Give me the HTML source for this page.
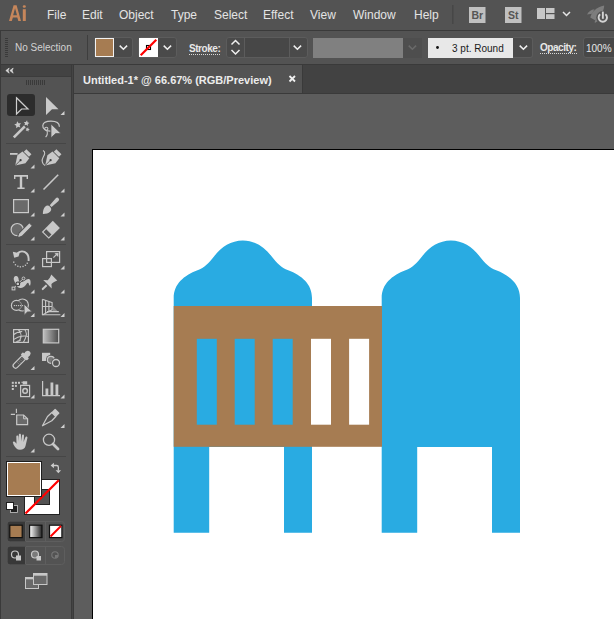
<!DOCTYPE html>
<html><head><meta charset="utf-8">
<style>
*{margin:0;padding:0;box-sizing:border-box}
html,body{width:614px;height:619px;overflow:hidden;background:#535353;font-family:"Liberation Sans",sans-serif}
.a{position:absolute}
.t{position:absolute;white-space:nowrap;line-height:1}
</style></head><body>
<!-- menu bar -->
<div class="a" style="left:0;top:0;width:614px;height:30px;background:#535353"></div>
<div class="a" style="left:0;top:30px;width:614px;height:1px;background:#3a3a3a"></div>
<!-- control bar -->
<div class="a" style="left:0;top:31px;width:614px;height:33px;background:#535353"></div>
<div class="a" style="left:0;top:30px;width:1px;height:589px;background:#3a3a3a"></div>
<div class="a" style="left:0;top:64px;width:614px;height:1px;background:#3a3a3a"></div>
<!-- toolbar -->
<div class="a" style="left:1px;top:65px;width:70px;height:11px;background:#434343"></div>
<div class="a" style="left:1px;top:76px;width:70px;height:1px;background:#3c3c3c"></div>
<div class="a" style="left:71px;top:65px;width:3px;height:554px;background:#3a3a3a"></div><div class="a" style="left:72px;top:65px;width:1px;height:554px;background:#444"></div>
<!-- tab bar -->
<div class="a" style="left:74px;top:65px;width:540px;height:28px;background:#424242"></div>
<div class="a" style="left:74px;top:65px;width:228px;height:28px;background:#535353"></div>
<div class="a" style="left:302px;top:65px;width:1px;height:28px;background:#3a3a3a"></div>
<div class="a" style="left:74px;top:93px;width:540px;height:1px;background:#3a3a3a"></div>
<!-- canvas -->
<div class="a" style="left:74px;top:94px;width:540px;height:525px;background:#5d5d5d"></div>
<div class="a" style="left:92px;top:149px;width:522px;height:470px;background:#fff;border-left:1px solid #000;border-top:1px solid #000"></div>

<!-- control bar widgets -->
<div class="a" style="left:87px;top:35px;width:1px;height:25px;background:#3e3e3e"></div>
<div class="a" style="left:94px;top:37px;width:39px;height:21px;border:1px solid #5c5c5c;border-radius:3px;background:#4a4a4a"></div>
<div class="a" style="left:95px;top:38px;width:19px;height:19px;background:#fff;border:1px solid #f2f2f2"></div>
<div class="a" style="left:96px;top:39px;width:17px;height:17px;background:#a67c52"></div>
<div class="a" style="left:138px;top:37px;width:39px;height:21px;border:1px solid #5c5c5c;border-radius:3px;background:#4a4a4a"></div>
<div class="a" style="left:139px;top:38px;width:19px;height:19px;background:#fff"></div>
<div class="a" style="left:226px;top:37px;width:82px;height:21px;border:1px solid #5c5c5c;border-radius:3px;background:#4a4a4a"></div>
<div class="a" style="left:244px;top:38px;width:1px;height:19px;background:#5c5c5c"></div>
<div class="a" style="left:245px;top:38px;width:44px;height:19px;background:#474747"></div>
<div class="a" style="left:289px;top:38px;width:1px;height:19px;background:#5c5c5c"></div>
<div class="a" style="left:313px;top:38px;width:90px;height:20px;background:#808080"></div>
<div class="a" style="left:403px;top:38px;width:19px;height:20px;background:#4e4e4e"></div>
<div class="a" style="left:428px;top:38px;width:86px;height:20px;background:#e8e8e8"></div>
<div class="a" style="left:513px;top:37px;width:20px;height:21px;border:1px solid #5c5c5c;border-left:none;border-radius:0 3px 3px 0;background:#4a4a4a"></div>
<div class="a" style="left:583px;top:37px;width:40px;height:21px;border:1px solid #5c5c5c;border-radius:3px;background:#474747"></div>

<!-- text -->
<div class="t" style="left:47px;top:9px;font-size:12px;color:#e4e4e4">File</div>
<div class="t" style="left:82px;top:9px;font-size:12px;color:#e4e4e4">Edit</div>
<div class="t" style="left:119px;top:9px;font-size:12px;color:#e4e4e4">Object</div>
<div class="t" style="left:171px;top:9px;font-size:12px;color:#e4e4e4">Type</div>
<div class="t" style="left:214px;top:9px;font-size:12px;color:#e4e4e4">Select</div>
<div class="t" style="left:263px;top:9px;font-size:12px;color:#e4e4e4">Effect</div>
<div class="t" style="left:310px;top:9px;font-size:12px;color:#e4e4e4">View</div>
<div class="t" style="left:353px;top:9px;font-size:12px;color:#e4e4e4">Window</div>
<div class="t" style="left:414px;top:9px;font-size:12px;color:#e4e4e4">Help</div>

<div class="t" style="left:15px;top:43px;font-size:10px;color:#d2d2d2">No Selection</div>
<div class="t" style="left:189px;top:44px;font-size:10px;color:#e8e8e8;font-weight:bold;letter-spacing:-0.45px">Stroke:</div>
<div class="t" style="left:452px;top:44px;font-size:10px;color:#1a1a1a">3 pt. Round</div>
<div class="t" style="left:540px;top:43px;font-size:10px;color:#e8e8e8;font-weight:bold;letter-spacing:-0.45px">Opacity:</div>
<div class="t" style="left:586px;top:44px;font-size:10px;color:#e8e8e8">100%</div>
<div class="t" style="left:83px;top:75px;font-size:11px;color:#ececec;font-weight:bold">Untitled-1* @ 66.67% (RGB/Preview)</div>
<svg class="a" style="left:0;top:0" width="614" height="619" viewBox="0 0 614 619">
<!-- artwork -->
<g fill="#29abe2">
<path id="post" d="M173.7,532.8 L173.7,298 C173.7,284 184,275.5 197.5,270.3 C204.5,267.6 209,263 214,256.5 C221,247 231,240.4 242.85,240.4 C254.7,240.4 264.7,247 271.7,256.5 C276.7,263 281.2,267.6 288.2,270.3 C301.7,275.5 312,284 312,298 L312,532.8 L284,532.8 L284,447 L209.2,447 L209.2,532.8 Z"/>
<use href="#post" transform="translate(208,0)"/>
</g>
<rect x="173.7" y="306" width="208.3" height="140.8" fill="#a67c52"/>
<g fill="#29abe2">
<rect x="196.8" y="338.8" width="20" height="85.9"/>
<rect x="234.7" y="338.8" width="20" height="85.9"/>
<rect x="272.7" y="338.8" width="20" height="85.9"/>
</g>
<g fill="#fff">
<rect x="311" y="338.8" width="20" height="85.9"/>
<rect x="349.1" y="338.8" width="20" height="85.9"/>
</g>
</svg>

<svg class="a" style="left:0;top:0" width="614" height="619" viewBox="0 0 614 619">
<!-- Ai logo -->
<path fill="#c6865b" fill-rule="evenodd" d="M9,21 L13.6,5.2 L16.6,5.2 L21,21 L18.3,21 L17.3,17.4 L12.9,17.4 L11.8,21 Z M13.1,15.2 L17,15.2 L15.05,8.3 Z"/>
<rect x="22.8" y="9.2" width="3" height="11.8" fill="#c6865b"/>
<rect x="22.8" y="5.2" width="3" height="2.6" rx="1.2" fill="#c6865b"/>
<!-- menu separator + app icons -->
<rect x="452" y="5" width="1.5" height="19" fill="#474747"/>
<rect x="469" y="7" width="16.5" height="16" fill="#c0c0c0"/>
<text x="477.3" y="19.2" font-size="10.5" font-weight="bold" fill="#555555" text-anchor="middle" font-family="Liberation Sans">Br</text>
<rect x="505" y="7" width="16.5" height="16" fill="#c0c0c0"/>
<text x="513.3" y="19.2" font-size="10.5" font-weight="bold" fill="#555555" text-anchor="middle" font-family="Liberation Sans">St</text>
<rect x="537" y="8" width="8" height="11" fill="#c8c8c8"/>
<rect x="546" y="8" width="8.5" height="5" fill="#c8c8c8"/>
<rect x="546" y="14.2" width="8.5" height="4.8" fill="#c8c8c8"/>
<path d="M563,12 L566.5,15.5 L570,12" fill="none" stroke="#e6e6e6" stroke-width="1.5"/>
<path d="M590.3,17.6 C591.5,12 596.5,7 604.2,5.6 C604,11.5 600.5,16.5 595,20.2 Z" fill="#7d7d7d"/>
<path d="M587,14.6 C588.5,11.5 591,9.5 594.5,9.2 L592,13.8 Z" fill="#7d7d7d"/>
<path d="M594.8,23 C594.5,21 595.5,19 597.5,17.5 L598.8,20.5 Z" fill="#7d7d7d"/>
<circle cx="602.8" cy="17.6" r="6.6" fill="#535353"/>
<path d="M600.2,14.3 A4.2,4.2 0 1 0 605.4,14.3" fill="none" stroke="#d4d4d4" stroke-width="1.9"/>
<rect x="601.6" y="11" width="2.4" height="8.3" fill="#535353"/>
<rect x="601.9" y="11.6" width="1.9" height="7.2" fill="#d4d4d4"/>

<!-- control bar grip + chevrons -->
<g fill="#3a3a3a"><rect x="5" y="38" width="3" height="1"/><rect x="5" y="40" width="3" height="1"/><rect x="5" y="42" width="3" height="1"/><rect x="5" y="44" width="3" height="1"/><rect x="5" y="46" width="3" height="1"/><rect x="5" y="48" width="3" height="1"/><rect x="5" y="50" width="3" height="1"/><rect x="5" y="52" width="3" height="1"/><rect x="5" y="54" width="3" height="1"/><rect x="5" y="56" width="3" height="1"/></g>
<g fill="none" stroke="#f0f0f0" stroke-width="1.5">
<path d="M119.7,45.6 L123.4,49.3 L127.1,45.6"/>
<path d="M163.7,45.6 L167.4,49.3 L171.1,45.6"/>
<path d="M231.5,44.5 L235.5,40.5 L239.5,44.5"/>
<path d="M231.5,50 L235.5,54 L239.5,50"/>
<path d="M293.7,45.6 L297.4,49.3 L301.1,45.6"/>
<path d="M519.7,45.6 L523.4,49.3 L527.1,45.6"/>
</g>
<path d="M408.7,45.6 L412.4,49.3 L416.1,45.6" fill="none" stroke="#6a6a6a" stroke-width="1.5"/>
<rect x="146.5" y="45.5" width="4" height="4" fill="none" stroke="#000" stroke-width="1.1"/>
<path d="M140.7,55.2 L156.3,39.7" stroke="#ff0000" stroke-width="2.2"/>
<circle cx="437.5" cy="47.5" r="1.4" fill="#111"/>
<g fill="#d8d8d8"><rect x="189" y="54" width="1" height="1"/><rect x="191" y="54" width="1" height="1"/><rect x="193" y="54" width="1" height="1"/><rect x="195" y="54" width="1" height="1"/><rect x="197" y="54" width="1" height="1"/><rect x="199" y="54" width="1" height="1"/><rect x="201" y="54" width="1" height="1"/><rect x="203" y="54" width="1" height="1"/><rect x="205" y="54" width="1" height="1"/><rect x="207" y="54" width="1" height="1"/><rect x="209" y="54" width="1" height="1"/><rect x="211" y="54" width="1" height="1"/><rect x="213" y="54" width="1" height="1"/><rect x="215" y="54" width="1" height="1"/><rect x="217" y="54" width="1" height="1"/><rect x="219" y="54" width="1" height="1"/></g>
<g fill="#d8d8d8"><rect x="540" y="53" width="1" height="1"/><rect x="542" y="53" width="1" height="1"/><rect x="544" y="53" width="1" height="1"/><rect x="546" y="53" width="1" height="1"/><rect x="548" y="53" width="1" height="1"/><rect x="550" y="53" width="1" height="1"/><rect x="552" y="53" width="1" height="1"/><rect x="554" y="53" width="1" height="1"/><rect x="556" y="53" width="1" height="1"/><rect x="558" y="53" width="1" height="1"/><rect x="560" y="53" width="1" height="1"/><rect x="562" y="53" width="1" height="1"/><rect x="564" y="53" width="1" height="1"/><rect x="566" y="53" width="1" height="1"/><rect x="568" y="53" width="1" height="1"/><rect x="570" y="53" width="1" height="1"/><rect x="572" y="53" width="1" height="1"/><rect x="574" y="53" width="1" height="1"/><rect x="576" y="53" width="1" height="1"/></g>
<!-- tab close -->
<path d="M289.5,76 L295,81.5 M295,76 L289.5,81.5" stroke="#f0f0f0" stroke-width="1.8"/>
<!-- panel header << -->
<path d="M9.2,68 L5.8,70.6 L9.2,73.2 L8.2,70.6 Z M13.2,68 L9.8,70.6 L13.2,73.2 L12.2,70.6 Z" fill="#d8d8d8" stroke="#d8d8d8" stroke-width="0.6" stroke-linejoin="round"/>
<g fill="#3a3a3a"><rect x="26" y="80" width="1" height="5"/><rect x="28" y="80" width="1" height="5"/><rect x="30" y="80" width="1" height="5"/><rect x="32" y="80" width="1" height="5"/><rect x="34" y="80" width="1" height="5"/><rect x="36" y="80" width="1" height="5"/><rect x="38" y="80" width="1" height="5"/><rect x="40" y="80" width="1" height="5"/><rect x="42" y="80" width="1" height="5"/><rect x="44" y="80" width="1" height="5"/></g>
<!-- separators -->
<g fill="#464646"><rect x="6" y="143" width="60" height="1"/><rect x="6" y="244" width="60" height="1"/><rect x="6" y="322" width="60" height="1"/><rect x="6" y="374" width="60" height="1"/><rect x="6" y="403" width="60" height="1"/><rect x="6" y="456" width="60" height="1"/></g>
<!-- corner triangles -->
<g fill="#d0d0d0">
<path d="M64.5,111 V115 H60.5Z"/>
<path d="M34.5,164.5 V168.5 H30.5Z"/>
<path d="M34.5,188.5 V192.5 H30.5Z"/><path d="M64.5,188.5 V192.5 H60.5Z"/>
<path d="M34.5,212.5 V216.5 H30.5Z"/><path d="M64.5,212.5 V216.5 H60.5Z"/>
<path d="M34.5,236.5 V240.5 H30.5Z"/><path d="M64.5,236.5 V240.5 H60.5Z"/>
<path d="M34.5,265.5 V269.5 H30.5Z"/><path d="M64.5,265.5 V269.5 H60.5Z"/>
<path d="M34.5,289.5 V293.5 H30.5Z"/><path d="M64.5,289.5 V293.5 H60.5Z"/>
<path d="M34.5,313 V317 H30.5Z"/><path d="M64.5,313 V317 H60.5Z"/>
<path d="M34.5,366 V370 H30.5Z"/>
<path d="M34.5,394.5 V398.5 H30.5Z"/><path d="M64.5,394.5 V398.5 H60.5Z"/>
<path d="M64.5,424 V428 H60.5Z"/>
<path d="M34.5,448.5 V452.5 H30.5Z"/>
</g>
<!-- TOOLS -->
<rect x="7" y="94" width="28" height="22" rx="3" fill="#2c2c2c"/>
<path d="M16.5,97.8 L28,109 L21.6,109 L16.5,114 Z" fill="none" stroke="#cfcfcf" stroke-width="1.2" stroke-linejoin="miter"/>
<path d="M46,97 L58.5,109.3 L52,109.3 L46,115 Z" fill="#cacaca"/>
<!-- wand -->
<path d="M13.8,137.3 L24.8,126.3" stroke="#c8c8c8" stroke-width="2.6"/>
<path d="M17.17,121.35 L18.59,123.28 L20.98,123.21 L19.58,125.15 L20.39,127.40 L18.11,126.67 L16.22,128.14 L16.21,125.75 L14.24,124.40 L16.51,123.65 Z" fill="#c8c8c8"/>
<path d="M27.02,120.35 L27.58,122.26 L29.47,122.88 L27.82,124.00 L27.82,126.00 L26.24,124.78 L24.34,125.38 L25.01,123.51 L23.85,121.89 L25.84,121.95 Z" fill="#c8c8c8"/>
<path d="M28.10,127.28 L28.39,128.78 L29.80,129.38 L28.46,130.13 L28.32,131.65 L27.20,130.61 L25.71,130.95 L26.35,129.56 L25.57,128.25 L27.09,128.43 Z" fill="#c8c8c8"/>
<!-- lasso -->
<path d="M50.5,131.2 C45,131 42.6,128.5 42.8,125.5 C43.1,122.6 47,121.2 51,121.2 C55.5,121.2 59.4,123 59.4,126.8" fill="none" stroke="#c8c8c8" stroke-width="1.2"/>
<circle cx="46.3" cy="128.8" r="1.6" fill="none" stroke="#c8c8c8" stroke-width="1.1"/>
<path d="M46.8,130.4 C47.8,132.8 47.3,135.4 45.6,137.2" fill="none" stroke="#c8c8c8" stroke-width="1.1"/>
<path d="M51,124 L61,133.6 L55.6,133.6 L51,137.8 Z" fill="#cacaca" stroke="#535353" stroke-width="0.7"/>
<!-- pen -->
<rect x="10" y="153" width="7.6" height="1.8" fill="#c8c8c8"/>
<g transform="translate(22.7,158) rotate(45)">
<rect x="-3.6" y="-8.8" width="7.2" height="3.6" fill="#c8c8c8"/>
<path d="M-4.8,-4.5 H4.8 L5.7,1.8 L0,10.6 L-5.7,1.8 Z" fill="#c8c8c8"/>
<circle cx="0" cy="3" r="1.1" fill="#3e3e3e"/>
<path d="M0,3 V10.6" stroke="#3e3e3e" stroke-width="0.75"/>
</g>
<g transform="translate(52.7,158) rotate(45)">
<rect x="-3.6" y="-8.8" width="7.2" height="3.6" fill="#c8c8c8"/>
<path d="M-4.8,-4.5 H4.8 L5.7,1.8 L0,10.6 L-5.7,1.8 Z" fill="#c8c8c8"/>
<circle cx="0" cy="3" r="1.1" fill="#3e3e3e"/>
<path d="M0,3 V10.6" stroke="#3e3e3e" stroke-width="0.75"/>
</g>
<path d="M43,150.5 C46,152 44.5,155 43,157.5 C41.5,160 42,164 45,165.5" fill="none" stroke="#c8c8c8" stroke-width="1.1"/>
<!-- type -->
<path d="M14,175 H28 V179 H26.6 V176.7 H22.2 V187.4 H24.6 V189 H17.4 V187.4 H19.8 V176.7 H15.4 V179 H14 Z" fill="#c8c8c8"/>
<!-- line -->
<path d="M43.5,189.5 L58.2,174.8" stroke="#c8c8c8" stroke-width="1.6"/>
<!-- rect -->
<rect x="13.6" y="199.6" width="14.8" height="13" fill="#6a6a6a" stroke="#cacaca" stroke-width="1.2"/>
<!-- brush -->
<g transform="translate(50.8,206) rotate(45)">
<path d="M-1.9,-9 A1.9,1.9 0 0 1 1.9,-9 L1.3,0.2 H-1.3 Z" fill="#c8c8c8"/>
<path d="M-3.5,4.2 C-3.5,2.2 -2,1.1 0,1.1 C2,1.1 3.5,2.2 3.5,4.2 C3.5,7 2,9.3 0,11.2 C-2,9.3 -3.5,7 -3.5,4.2 Z" fill="#c8c8c8"/>
</g>
<!-- shaper -->
<circle cx="17.2" cy="229.6" r="6.1" fill="#6a6a6a" stroke="#c8c8c8" stroke-width="1.2"/>
<g transform="translate(24.4,230.8) rotate(45)">
<path d="M-2.2,-9.2 H2.2 V5.5 L0.8,8.8 H-0.8 L-2.2,5.5 Z" fill="#c8c8c8" stroke="#535353" stroke-width="1"/>
</g>
<!-- eraser -->
<g transform="translate(51.1,229.6) rotate(-45)">
<rect x="-2.6" y="-5" width="10" height="10" fill="#c8c8c8"/>
<rect x="-7.6" y="-4.3" width="5" height="8.6" fill="#535353" stroke="#c8c8c8" stroke-width="1.2"/>
</g>
<!-- rotate -->
<path d="M17.5,253.2 C19,252 20.5,251.4 22,251.4 C25.8,251.4 28.6,254.6 28.6,258.5 V261" fill="none" stroke="#c8c8c8" stroke-width="1.9"/>
<path d="M12.8,251.8 L19.6,253.2 L18.5,256.5 L14.2,257.8 Z" fill="#c8c8c8"/>
<g fill="#c8c8c8"><rect x="13.1" y="261.5" width="1.3" height="1.3"/><rect x="14.8" y="264.1" width="1.3" height="1.3"/><rect x="17.2" y="265.6" width="1.3" height="1.3"/><rect x="19.7" y="266.2" width="1.3" height="1.3"/><rect x="22.4" y="265.8" width="1.3" height="1.3"/><rect x="24.8" y="264.6" width="1.3" height="1.3"/><rect x="26.6" y="262.6" width="1.3" height="1.3"/></g>
<!-- scale -->
<rect x="42.6" y="258.6" width="8.8" height="8" fill="none" stroke="#c8c8c8" stroke-width="1.2"/>
<rect x="46.6" y="251.6" width="13" height="10.8" fill="none" stroke="#c8c8c8" stroke-width="1.2"/>
<path d="M53.4,257.6 L57.4,253.6" stroke="#c8c8c8" stroke-width="1.2"/>
<path d="M58.5,253 L54.5,253.3 L58.2,257 Z" fill="#c8c8c8"/>
<!-- puppet -->
<path d="M13.8,279.8 C13.4,277.5 14.6,275.8 16.2,276 C17.6,276.2 18.6,277.5 18.6,279 C18.4,280.5 19.5,282 21.5,282 C23.5,282 25,280.6 26.5,279.6 C28.3,278.6 30,279 30.5,281 C30.8,282.5 30.6,284 30.2,285.4 C29.5,285.8 29,285 28.8,284 C28.5,282.5 27.8,282.3 27,283.2 C25.5,285.5 23.5,287.8 21,288 C18.5,288.2 16.5,286.5 15.8,284.5 C15.3,283 14.3,281.5 13.8,279.8 Z" fill="#c8c8c8"/>
<path d="M13.5,288.5 L17.8,283.9 L23.5,278.4" stroke="#535353" stroke-width="2.2"/>
<path d="M13.5,288.5 L17.8,283.9 L23.5,278.4" stroke="#c8c8c8" stroke-width="0.9"/>
<rect x="12.1" y="287.1" width="2.8" height="2.8" fill="#535353" stroke="#c8c8c8" stroke-width="1"/>
<circle cx="23.5" cy="278.4" r="1.4" fill="#535353" stroke="#c8c8c8" stroke-width="1"/>
<circle cx="17.8" cy="283.9" r="1.9" fill="#c8c8c8" stroke="#3a3a3a" stroke-width="1.1"/>
<!-- pin -->
<g transform="translate(48.6,283.2) rotate(45)">
<path d="M-4.2,-8 H4.2 C3.2,-6 2.5,-3.5 2.6,-1.4 L6,1.6 H-6 L-2.6,-1.4 C-2.5,-3.5 -3.2,-6 -4.2,-8 Z" fill="#c8c8c8"/>
<path d="M-1,2.8 H1 V8.3 A1,1 0 0 1 -1,8.3 Z" fill="#c8c8c8"/>
</g>
<!-- shape builder -->
<circle cx="16.4" cy="305.4" r="4.4" fill="none" stroke="#c8c8c8" stroke-width="2.4"/>
<circle cx="22.4" cy="305" r="5.4" fill="none" stroke="#c8c8c8" stroke-width="2.4"/>
<circle cx="16.4" cy="305.4" r="4.4" fill="#535353"/>
<circle cx="22.4" cy="305" r="5.4" fill="#535353"/>
<path d="M18.6,301.2 A4.4,4.4 0 0 1 18.6,309.6" fill="none" stroke="#8c8c8c" stroke-width="1"/>
<g fill="#d0d0d0"><circle cx="14.4" cy="305.6" r="0.7"/><circle cx="16.4" cy="305.6" r="0.7"/><circle cx="18.5" cy="305.6" r="0.7"/><circle cx="20.5" cy="305.6" r="0.7"/><circle cx="22.6" cy="305.6" r="0.7"/></g>
<path d="M24,304 L32.2,311.8 L27.4,312 L24.2,315.2 Z" fill="#cacaca" stroke="#535353" stroke-width="0.8" stroke-linejoin="miter"/>
<!-- perspective grid -->
<path d="M42.4,299.3 V315 M42.4,299.3 L52.6,302.8 M42.4,315 L52.6,309.5 M45.6,300.4 V313.3 M48.9,301.5 V311.5 M52.1,302.6 V309.8 M42.4,306.5 H52.3" fill="none" stroke="#c8c8c8" stroke-width="1.1"/>
<path d="M47,311.6 H58.8 M42.4,314.7 H60.4" stroke="#c8c8c8" stroke-width="1.1"/>
<path d="M52.6,305.8 L57.4,311 H52.6 Z" fill="#8a8a8a"/>
<!-- mesh -->
<rect x="13.6" y="329.6" width="14.8" height="12.8" fill="none" stroke="#c8c8c8" stroke-width="1.2"/>
<path d="M18.3,329.5 C21,332 21.5,336 20.5,338.5 C19.8,340 19,341.5 18.5,342.8 M24.8,329.5 C26.6,332 26.5,336 25.3,338.5 C24.6,340 23.8,341.5 23.2,342.8 M13.4,334.8 C15.5,333 18.5,331.8 22.2,331.6 M13.4,339.6 C16,338 19,336.5 21.3,336.2 C24,336 26.5,336 28.6,336.4 M15.5,342.6 C17,341.2 19,340.4 20.8,340.2" fill="none" stroke="#c8c8c8" stroke-width="1.05"/>
<!-- gradient -->
<defs><linearGradient id="gr" x1="0" x2="1"><stop offset="0" stop-color="#c0c0c0"/><stop offset="1" stop-color="#4a4a4a"/></linearGradient>
<linearGradient id="gr2" x1="0" x2="1"><stop offset="0" stop-color="#fff"/><stop offset="1" stop-color="#222"/></linearGradient></defs>
<rect x="43.3" y="329.3" width="15.4" height="13.6" fill="url(#gr)" stroke="#c8c8c8" stroke-width="1.2"/>
<!-- eyedropper -->
<g transform="translate(21.3,360) rotate(45)">
<circle cx="0" cy="-9.2" r="2.7" fill="#c8c8c8"/>
<rect x="-2.7" y="-9.2" width="5.4" height="3" fill="#c8c8c8"/>
<rect x="-4.3" y="-6.6" width="8.6" height="3.2" rx="0.8" fill="#c8c8c8"/>
<path d="M-2.5,-3.4 H2.5 V8 A2.5,2.5 0 0 1 -2.5,8 Z" fill="#535353" stroke="#c8c8c8" stroke-width="1.25"/>
<path d="M-1.2,-1.5 H1.2 M-1.2,0.5 H1.2 M-1.2,2.5 H1.2 M-1.2,4.5 H1.2" stroke="#8a8a8a" stroke-width="0.7"/>
</g>
<!-- blend -->
<rect x="42" y="352.8" width="8.2" height="8.2" fill="#c8c8c8"/>
<circle cx="50.9" cy="359.8" r="4.9" fill="#535353"/>
<circle cx="50.9" cy="359.8" r="3.5" fill="#7a7a7a" stroke="#c8c8c8" stroke-width="1.2"/>
<circle cx="56" cy="363" r="4.9" fill="#535353"/>
<circle cx="56" cy="363" r="3.5" fill="#535353" stroke="#c8c8c8" stroke-width="1.3"/>
<!-- symbol sprayer -->
<g fill="#c8c8c8"><rect x="11.8" y="381.8" width="2" height="2"/><rect x="14.9" y="381.8" width="2" height="2"/><rect x="18" y="381.8" width="2" height="2"/><rect x="11.8" y="384.9" width="2" height="2"/><rect x="14.9" y="384.9" width="2" height="2"/><rect x="11.8" y="388" width="2" height="2"/></g>
<path d="M22.6,384.6 L22.9,381.2 H27.2 V384.6 Z M21.4,381.8 H23 V382.8 H21.4 Z" fill="#c8c8c8"/>
<rect x="20.6" y="385.4" width="9" height="11.2" fill="none" stroke="#c8c8c8" stroke-width="1.2"/>
<circle cx="25.1" cy="390.9" r="2.3" fill="none" stroke="#c8c8c8" stroke-width="1.5"/>
<!-- graph -->
<path d="M42.6,381 V395.6 H60" fill="none" stroke="#c8c8c8" stroke-width="1.2"/>
<rect x="45.5" y="388.5" width="2.8" height="7" fill="#c8c8c8"/>
<rect x="50.5" y="382.5" width="2.8" height="13" fill="#c8c8c8"/>
<rect x="55.5" y="384.5" width="2.8" height="11" fill="#c8c8c8"/>
<!-- artboard -->
<path d="M16.7,415 H23.6 L27.6,418.8 V424.6 H16.7 Z" fill="#6a6a6a" stroke="#c8c8c8" stroke-width="1.2"/>
<path d="M23.6,415 V418.8 H27.6" fill="none" stroke="#c8c8c8" stroke-width="1"/>
<path d="M10.8,414.4 H15 M16.4,408.8 V413" stroke="#c8c8c8" stroke-width="1.1"/>
<!-- pencil -->
<g transform="translate(50,418.3) rotate(45)">
<rect x="-3.3" y="-10.6" width="6.6" height="5.2" rx="1" fill="#c8c8c8"/>
<path d="M-2.8,-5.4 L-3,0.5 L0,10.6 L3,0.5 L2.8,-5.4 Z" fill="#535353" stroke="#c8c8c8" stroke-width="1.25" stroke-linejoin="round"/>
</g>
<!-- hand -->
<path d="M20,449.8 C17,449.8 15,447.5 13.5,444.5 L12.8,442 C13.5,441 15,441.5 16,443 L16.5,444 L16.3,436.5 C16.3,435 18.3,435 18.4,436.5 L18.8,441.5 L18.8,434.8 C18.8,433.3 21,433.3 21,434.8 L21.3,441.5 L22,435.5 C22.1,434 24.1,434.2 24,435.7 L23.6,442 L25.3,437.5 C25.8,436 27.8,436.6 27.4,438 L25.5,446 C24.8,448.5 23,449.8 20,449.8 Z" fill="#c8c8c8"/>
<!-- zoom -->
<circle cx="49" cy="439.8" r="5.6" fill="none" stroke="#c8c8c8" stroke-width="1.3"/>
<path d="M53,444 L58,449" stroke="#c8c8c8" stroke-width="2.8" stroke-linecap="round"/>
<!-- fill/stroke -->
<rect x="24.5" y="479.5" width="35" height="35" fill="#fff" stroke="#222" stroke-width="1"/>
<rect x="34.5" y="489.5" width="15" height="15" fill="#535353" stroke="#222" stroke-width="1"/>
<path d="M25.5,513.5 L58.8,480.2" stroke="#ff0000" stroke-width="2.2"/>
<rect x="6.5" y="461.5" width="35" height="35" fill="#fff" stroke="#1e1e1e" stroke-width="1"/>
<rect x="8" y="463" width="32" height="32" fill="#a67c52"/>
<path d="M53,465.5 H56.6 C57.7,465.5 58.35,466.2 58.35,467.3 V470.6" fill="none" stroke="#cccccc" stroke-width="1.3"/>
<path d="M50.6,465.5 L53.9,462.7 V468.2 Z M55.6,470.2 H61.1 L58.35,473.3 Z" fill="#cccccc"/>
<rect x="10.5" y="505.5" width="7" height="7" fill="#1e1e1e" stroke="#c8c8c8" stroke-width="0.8"/>
<rect x="6.5" y="502.5" width="7" height="7" fill="#fff" stroke="#1e1e1e" stroke-width="1"/>
<!-- color modes -->
<rect x="7.5" y="521.5" width="57" height="20" rx="3" fill="#535353" stroke="#5e5e5e" stroke-width="1"/>
<path d="M10.5,521.5 H25.5 V541.5 H10.5 A3,3 0 0 1 7.5,538.5 V524.5 A3,3 0 0 1 10.5,521.5 Z" fill="#383838"/>
<path d="M25.5,522 V541 M45.5,522 V541" stroke="#5e5e5e" stroke-width="1"/>
<rect x="9.8" y="525.2" width="12.4" height="12.4" fill="#a67c52" stroke="#111" stroke-width="1.2"/>
<rect x="29.6" y="525.2" width="12.4" height="12.4" fill="url(#gr2)" stroke="#111" stroke-width="1.2"/>
<rect x="49.5" y="525.2" width="12.4" height="12.4" fill="#fff" stroke="#111" stroke-width="1.2"/>
<path d="M50.5,536.5 L61,526" stroke="#ff0000" stroke-width="2"/>
<!-- draw modes -->
<rect x="7.5" y="546.5" width="57" height="18" rx="3" fill="#535353" stroke="#5e5e5e" stroke-width="1"/>
<path d="M10.5,546.5 H25.5 V564.5 H10.5 A3,3 0 0 1 7.5,561.5 V549.5 A3,3 0 0 1 10.5,546.5 Z" fill="#383838"/>
<path d="M25.5,547 V564 M45.5,547 V564" stroke="#5e5e5e" stroke-width="1"/>
<circle cx="15" cy="554.5" r="3.5" fill="none" stroke="#c8c8c8" stroke-width="1.2"/>
<rect x="16" y="555.5" width="5" height="5" fill="#c8c8c8"/>
<circle cx="35" cy="554.5" r="3.5" fill="#7a7a7a" stroke="#c8c8c8" stroke-width="1.2"/>
<rect x="36.5" y="556" width="4.5" height="4.5" fill="#c8c8c8"/>
<circle cx="55" cy="555" r="3.2" fill="none" stroke="#777" stroke-width="1.1"/>
<path d="M55,555 H58.2 A3.2,3.2 0 0 1 55,558.2 Z" fill="#777"/>
<!-- screen mode -->
<rect x="25.5" y="577.5" width="13" height="11" fill="#6a6a6a" stroke="#c8c8c8" stroke-width="1"/>
<rect x="25.5" y="577.5" width="13" height="1.8" fill="#c8c8c8"/>
<rect x="33.5" y="573.5" width="13.5" height="11" fill="#6a6a6a" stroke="#c8c8c8" stroke-width="1"/>
<rect x="33.5" y="573.5" width="13.5" height="2.2" fill="#c8c8c8"/>
</svg>
</body></html>
